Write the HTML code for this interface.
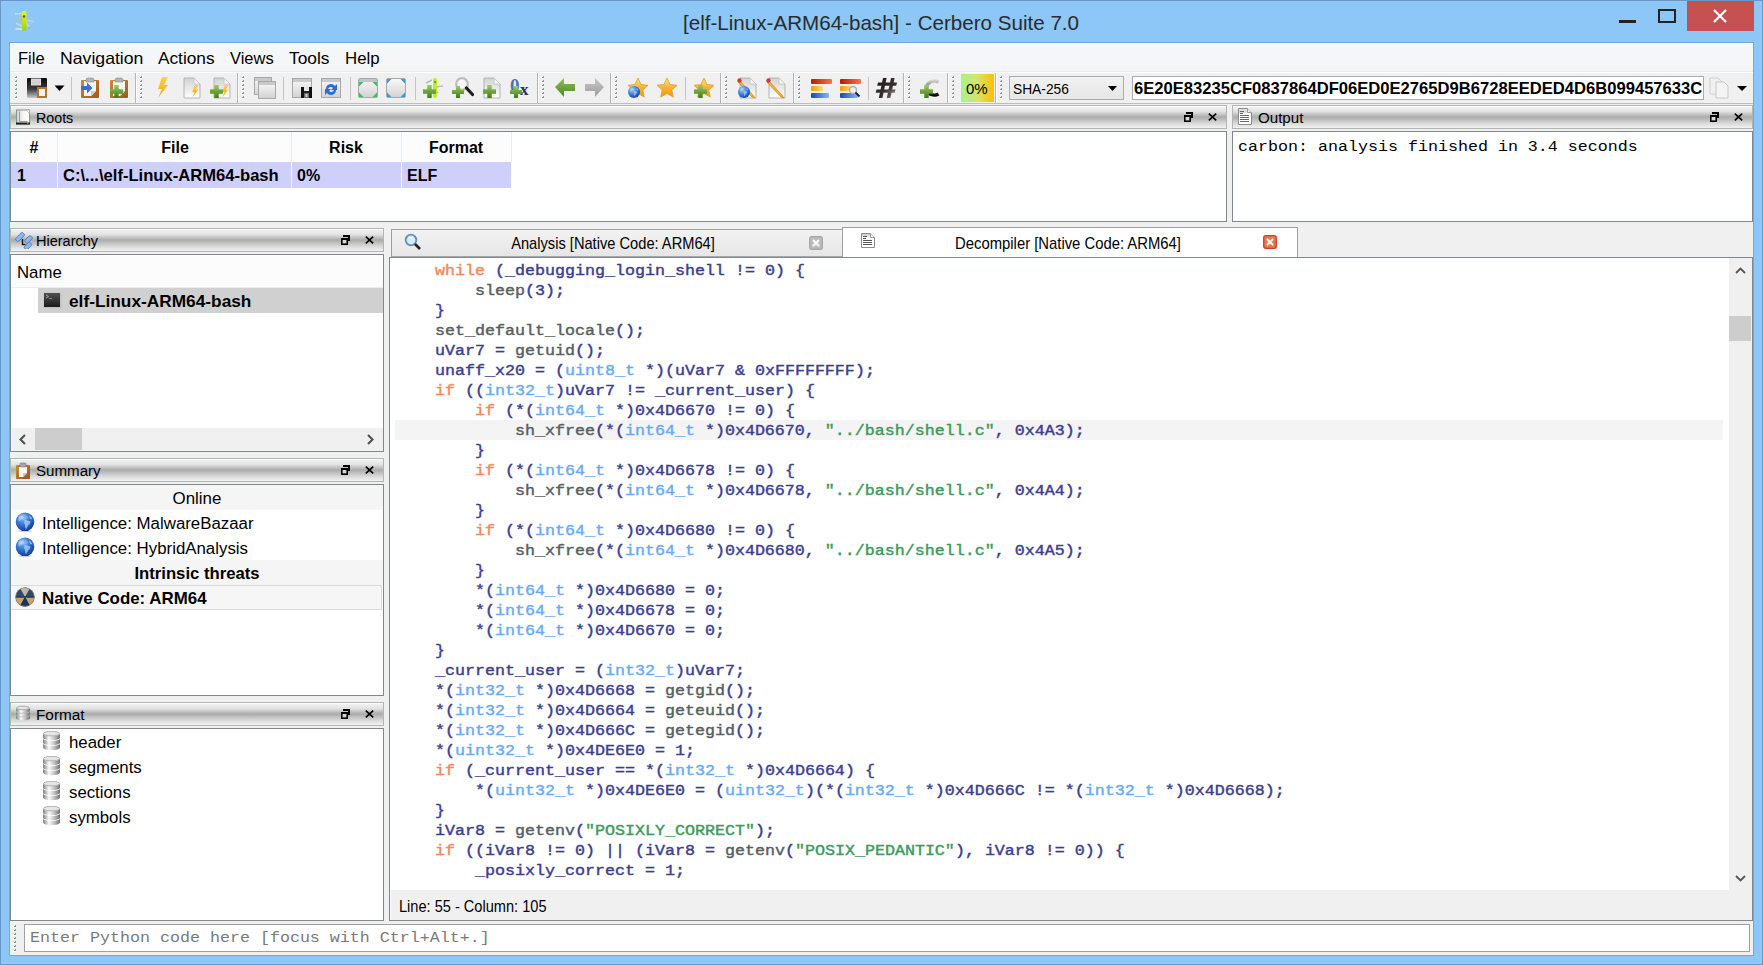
<!DOCTYPE html><html><head><meta charset="utf-8"><title>Cerbero Suite 7.0</title><style>
html,body{margin:0;padding:0}
body{width:1763px;height:965px;position:relative;overflow:hidden;background:#8CC7F7;font-family:"Liberation Sans",sans-serif}
.a{position:absolute;box-sizing:border-box}
.t{position:absolute;white-space:pre;line-height:normal}
</style></head><body>
<div class="a" style="left:0px;top:0px;width:1763px;height:965px;border:1px solid #6A96BF"></div>
<div class="a" style="left:1px;top:1px;width:1761px;height:963px;border:1px solid #90CCFF;opacity:.6"></div>
<svg class="a" style="left:8px;top:5px" width="32" height="32" viewBox="0 0 32 32"><defs><linearGradient id="gKn" x1="0" y1="0" x2="0" y2="1"><stop offset="0" stop-color="#E2FF00"/><stop offset="1" stop-color="#9AD400"/></linearGradient></defs><g stroke-linecap="round" fill="none"><path d="M14 8.5 L7.5 9" stroke="#D6D6D6" stroke-width="1.6"/><path d="M14 21 L8.5 18.5" stroke="#D2D2D2" stroke-width="1.6"/><path d="M14 24 L8 24" stroke="#E2E2E2" stroke-width="1.5"/><path d="M18 15 L25.5 16.5" stroke="#CFCFCF" stroke-width="1.5"/><path d="M18 16.5 L21 22.5" stroke="#D6D6D6" stroke-width="1.4"/></g><path d="M14.5 10 L5 15.2 Q3.8 16.6 5.6 16.6 L14.5 13.2 z" fill="#BDBDBD"/><circle cx="21" cy="22.8" r="1" fill="#A8A8A8"/><rect x="14" y="6" width="4.5" height="20" rx="2" fill="url(#gKn)"/><circle cx="16" cy="11.5" r="1.3" fill="#5A5A3A"/></svg>
<div class="t" style="left:683px;top:11.36px;font-family:'Liberation Sans', sans-serif;font-size:20.6px;font-weight:400;color:#2B2B2B;">[elf-Linux-ARM64-bash] - Cerbero Suite 7.0</div>
<div class="a" style="left:1619px;top:20px;width:17px;height:3px;background:#222"></div>
<div class="a" style="left:1658px;top:9px;width:18px;height:14px;border:2px solid #222"></div>
<div class="a" style="left:1687px;top:1px;width:67px;height:30px;background:#C75050"></div>
<svg class="a" style="left:1712px;top:9px" width="16" height="14" viewBox="0 0 16 14"><path d="M2 1 L14 13 M14 1 L2 13" stroke="#fff" stroke-width="2.2"/></svg>
<div class="a" style="left:9px;top:42px;width:1745px;height:914px;border:1px solid #74A8DB;background:#F0F0F0"></div>
<div class="a" style="left:10px;top:43px;width:1743px;height:29px;background:#F5F6F7;border-top:1px solid #FDFDFD"></div>
<div class="t" style="left:18px;top:49.07px;font-family:'Liberation Sans', sans-serif;font-size:16.5px;font-weight:400;color:#000;transform:scaleX(1.0);transform-origin:0 0;">File</div>
<div class="t" style="left:59.5px;top:49.07px;font-family:'Liberation Sans', sans-serif;font-size:16.5px;font-weight:400;color:#000;transform:scaleX(1.07);transform-origin:0 0;">Navigation</div>
<div class="t" style="left:158px;top:49.07px;font-family:'Liberation Sans', sans-serif;font-size:16.5px;font-weight:400;color:#000;transform:scaleX(1.045);transform-origin:0 0;">Actions</div>
<div class="t" style="left:230px;top:49.07px;font-family:'Liberation Sans', sans-serif;font-size:16.5px;font-weight:400;color:#000;transform:scaleX(1.0);transform-origin:0 0;">Views</div>
<div class="t" style="left:289px;top:49.07px;font-family:'Liberation Sans', sans-serif;font-size:16.5px;font-weight:400;color:#000;transform:scaleX(1.05);transform-origin:0 0;">Tools</div>
<div class="t" style="left:345px;top:49.07px;font-family:'Liberation Sans', sans-serif;font-size:16.5px;font-weight:400;color:#000;transform:scaleX(1.02);transform-origin:0 0;">Help</div>
<div class="a" style="left:10px;top:71px;width:1743px;height:1px;background:#E8E9EB"></div>
<div class="a" style="left:10px;top:72px;width:1743px;height:32px;background:#F0F0F0"></div>
<div class="a" style="left:10px;top:72px;width:1743px;height:1px;background:#FFFFFF"></div>
<div class="a" style="left:10px;top:103px;width:1743px;height:1px;background:#BDBDBD"></div>
<div class="a" style="left:10px;top:104px;width:1743px;height:1px;background:#F0F0F0"></div>
<div class="a" style="left:135px;top:73px;width:1px;height:30px;background:#B5B5B5"></div>
<div class="a" style="left:136px;top:73px;width:1px;height:30px;background:#FFFFFF"></div>
<div class="a" style="left:237px;top:73px;width:1px;height:30px;background:#B5B5B5"></div>
<div class="a" style="left:238px;top:73px;width:1px;height:30px;background:#FFFFFF"></div>
<div class="a" style="left:537px;top:73px;width:1px;height:30px;background:#B5B5B5"></div>
<div class="a" style="left:538px;top:73px;width:1px;height:30px;background:#FFFFFF"></div>
<div class="a" style="left:610px;top:73px;width:1px;height:30px;background:#B5B5B5"></div>
<div class="a" style="left:611px;top:73px;width:1px;height:30px;background:#FFFFFF"></div>
<div class="a" style="left:720px;top:73px;width:1px;height:30px;background:#B5B5B5"></div>
<div class="a" style="left:721px;top:73px;width:1px;height:30px;background:#FFFFFF"></div>
<div class="a" style="left:793px;top:73px;width:1px;height:30px;background:#B5B5B5"></div>
<div class="a" style="left:794px;top:73px;width:1px;height:30px;background:#FFFFFF"></div>
<div class="a" style="left:903px;top:73px;width:1px;height:30px;background:#B5B5B5"></div>
<div class="a" style="left:904px;top:73px;width:1px;height:30px;background:#FFFFFF"></div>
<div class="a" style="left:947px;top:73px;width:1px;height:30px;background:#B5B5B5"></div>
<div class="a" style="left:948px;top:73px;width:1px;height:30px;background:#FFFFFF"></div>
<div class="a" style="left:995px;top:73px;width:1px;height:30px;background:#B5B5B5"></div>
<div class="a" style="left:996px;top:73px;width:1px;height:30px;background:#FFFFFF"></div>
<svg class="a" style="left:14px;top:76px" width="4" height="24" viewBox="0 0 4 24"><rect x="2" y="0" width="1" height="1" fill="#A0A0A0"/><rect x="1" y="1" width="2" height="1" fill="#8E8E8E"/><rect x="0" y="2" width="3" height="1" fill="#FFF" opacity=".7"/><rect x="2" y="4" width="1" height="1" fill="#A0A0A0"/><rect x="1" y="5" width="2" height="1" fill="#8E8E8E"/><rect x="0" y="6" width="3" height="1" fill="#FFF" opacity=".7"/><rect x="2" y="8" width="1" height="1" fill="#A0A0A0"/><rect x="1" y="9" width="2" height="1" fill="#8E8E8E"/><rect x="0" y="10" width="3" height="1" fill="#FFF" opacity=".7"/><rect x="2" y="12" width="1" height="1" fill="#A0A0A0"/><rect x="1" y="13" width="2" height="1" fill="#8E8E8E"/><rect x="0" y="14" width="3" height="1" fill="#FFF" opacity=".7"/><rect x="2" y="16" width="1" height="1" fill="#A0A0A0"/><rect x="1" y="17" width="2" height="1" fill="#8E8E8E"/><rect x="0" y="18" width="3" height="1" fill="#FFF" opacity=".7"/><rect x="2" y="20" width="1" height="1" fill="#A0A0A0"/><rect x="1" y="21" width="2" height="1" fill="#8E8E8E"/><rect x="0" y="22" width="3" height="1" fill="#FFF" opacity=".7"/></svg>
<svg class="a" style="left:139px;top:76px" width="4" height="24" viewBox="0 0 4 24"><rect x="2" y="0" width="1" height="1" fill="#A0A0A0"/><rect x="1" y="1" width="2" height="1" fill="#8E8E8E"/><rect x="0" y="2" width="3" height="1" fill="#FFF" opacity=".7"/><rect x="2" y="4" width="1" height="1" fill="#A0A0A0"/><rect x="1" y="5" width="2" height="1" fill="#8E8E8E"/><rect x="0" y="6" width="3" height="1" fill="#FFF" opacity=".7"/><rect x="2" y="8" width="1" height="1" fill="#A0A0A0"/><rect x="1" y="9" width="2" height="1" fill="#8E8E8E"/><rect x="0" y="10" width="3" height="1" fill="#FFF" opacity=".7"/><rect x="2" y="12" width="1" height="1" fill="#A0A0A0"/><rect x="1" y="13" width="2" height="1" fill="#8E8E8E"/><rect x="0" y="14" width="3" height="1" fill="#FFF" opacity=".7"/><rect x="2" y="16" width="1" height="1" fill="#A0A0A0"/><rect x="1" y="17" width="2" height="1" fill="#8E8E8E"/><rect x="0" y="18" width="3" height="1" fill="#FFF" opacity=".7"/><rect x="2" y="20" width="1" height="1" fill="#A0A0A0"/><rect x="1" y="21" width="2" height="1" fill="#8E8E8E"/><rect x="0" y="22" width="3" height="1" fill="#FFF" opacity=".7"/></svg>
<svg class="a" style="left:241px;top:76px" width="4" height="24" viewBox="0 0 4 24"><rect x="2" y="0" width="1" height="1" fill="#A0A0A0"/><rect x="1" y="1" width="2" height="1" fill="#8E8E8E"/><rect x="0" y="2" width="3" height="1" fill="#FFF" opacity=".7"/><rect x="2" y="4" width="1" height="1" fill="#A0A0A0"/><rect x="1" y="5" width="2" height="1" fill="#8E8E8E"/><rect x="0" y="6" width="3" height="1" fill="#FFF" opacity=".7"/><rect x="2" y="8" width="1" height="1" fill="#A0A0A0"/><rect x="1" y="9" width="2" height="1" fill="#8E8E8E"/><rect x="0" y="10" width="3" height="1" fill="#FFF" opacity=".7"/><rect x="2" y="12" width="1" height="1" fill="#A0A0A0"/><rect x="1" y="13" width="2" height="1" fill="#8E8E8E"/><rect x="0" y="14" width="3" height="1" fill="#FFF" opacity=".7"/><rect x="2" y="16" width="1" height="1" fill="#A0A0A0"/><rect x="1" y="17" width="2" height="1" fill="#8E8E8E"/><rect x="0" y="18" width="3" height="1" fill="#FFF" opacity=".7"/><rect x="2" y="20" width="1" height="1" fill="#A0A0A0"/><rect x="1" y="21" width="2" height="1" fill="#8E8E8E"/><rect x="0" y="22" width="3" height="1" fill="#FFF" opacity=".7"/></svg>
<svg class="a" style="left:541px;top:76px" width="4" height="24" viewBox="0 0 4 24"><rect x="2" y="0" width="1" height="1" fill="#A0A0A0"/><rect x="1" y="1" width="2" height="1" fill="#8E8E8E"/><rect x="0" y="2" width="3" height="1" fill="#FFF" opacity=".7"/><rect x="2" y="4" width="1" height="1" fill="#A0A0A0"/><rect x="1" y="5" width="2" height="1" fill="#8E8E8E"/><rect x="0" y="6" width="3" height="1" fill="#FFF" opacity=".7"/><rect x="2" y="8" width="1" height="1" fill="#A0A0A0"/><rect x="1" y="9" width="2" height="1" fill="#8E8E8E"/><rect x="0" y="10" width="3" height="1" fill="#FFF" opacity=".7"/><rect x="2" y="12" width="1" height="1" fill="#A0A0A0"/><rect x="1" y="13" width="2" height="1" fill="#8E8E8E"/><rect x="0" y="14" width="3" height="1" fill="#FFF" opacity=".7"/><rect x="2" y="16" width="1" height="1" fill="#A0A0A0"/><rect x="1" y="17" width="2" height="1" fill="#8E8E8E"/><rect x="0" y="18" width="3" height="1" fill="#FFF" opacity=".7"/><rect x="2" y="20" width="1" height="1" fill="#A0A0A0"/><rect x="1" y="21" width="2" height="1" fill="#8E8E8E"/><rect x="0" y="22" width="3" height="1" fill="#FFF" opacity=".7"/></svg>
<svg class="a" style="left:614px;top:76px" width="4" height="24" viewBox="0 0 4 24"><rect x="2" y="0" width="1" height="1" fill="#A0A0A0"/><rect x="1" y="1" width="2" height="1" fill="#8E8E8E"/><rect x="0" y="2" width="3" height="1" fill="#FFF" opacity=".7"/><rect x="2" y="4" width="1" height="1" fill="#A0A0A0"/><rect x="1" y="5" width="2" height="1" fill="#8E8E8E"/><rect x="0" y="6" width="3" height="1" fill="#FFF" opacity=".7"/><rect x="2" y="8" width="1" height="1" fill="#A0A0A0"/><rect x="1" y="9" width="2" height="1" fill="#8E8E8E"/><rect x="0" y="10" width="3" height="1" fill="#FFF" opacity=".7"/><rect x="2" y="12" width="1" height="1" fill="#A0A0A0"/><rect x="1" y="13" width="2" height="1" fill="#8E8E8E"/><rect x="0" y="14" width="3" height="1" fill="#FFF" opacity=".7"/><rect x="2" y="16" width="1" height="1" fill="#A0A0A0"/><rect x="1" y="17" width="2" height="1" fill="#8E8E8E"/><rect x="0" y="18" width="3" height="1" fill="#FFF" opacity=".7"/><rect x="2" y="20" width="1" height="1" fill="#A0A0A0"/><rect x="1" y="21" width="2" height="1" fill="#8E8E8E"/><rect x="0" y="22" width="3" height="1" fill="#FFF" opacity=".7"/></svg>
<svg class="a" style="left:724px;top:76px" width="4" height="24" viewBox="0 0 4 24"><rect x="2" y="0" width="1" height="1" fill="#A0A0A0"/><rect x="1" y="1" width="2" height="1" fill="#8E8E8E"/><rect x="0" y="2" width="3" height="1" fill="#FFF" opacity=".7"/><rect x="2" y="4" width="1" height="1" fill="#A0A0A0"/><rect x="1" y="5" width="2" height="1" fill="#8E8E8E"/><rect x="0" y="6" width="3" height="1" fill="#FFF" opacity=".7"/><rect x="2" y="8" width="1" height="1" fill="#A0A0A0"/><rect x="1" y="9" width="2" height="1" fill="#8E8E8E"/><rect x="0" y="10" width="3" height="1" fill="#FFF" opacity=".7"/><rect x="2" y="12" width="1" height="1" fill="#A0A0A0"/><rect x="1" y="13" width="2" height="1" fill="#8E8E8E"/><rect x="0" y="14" width="3" height="1" fill="#FFF" opacity=".7"/><rect x="2" y="16" width="1" height="1" fill="#A0A0A0"/><rect x="1" y="17" width="2" height="1" fill="#8E8E8E"/><rect x="0" y="18" width="3" height="1" fill="#FFF" opacity=".7"/><rect x="2" y="20" width="1" height="1" fill="#A0A0A0"/><rect x="1" y="21" width="2" height="1" fill="#8E8E8E"/><rect x="0" y="22" width="3" height="1" fill="#FFF" opacity=".7"/></svg>
<svg class="a" style="left:797px;top:76px" width="4" height="24" viewBox="0 0 4 24"><rect x="2" y="0" width="1" height="1" fill="#A0A0A0"/><rect x="1" y="1" width="2" height="1" fill="#8E8E8E"/><rect x="0" y="2" width="3" height="1" fill="#FFF" opacity=".7"/><rect x="2" y="4" width="1" height="1" fill="#A0A0A0"/><rect x="1" y="5" width="2" height="1" fill="#8E8E8E"/><rect x="0" y="6" width="3" height="1" fill="#FFF" opacity=".7"/><rect x="2" y="8" width="1" height="1" fill="#A0A0A0"/><rect x="1" y="9" width="2" height="1" fill="#8E8E8E"/><rect x="0" y="10" width="3" height="1" fill="#FFF" opacity=".7"/><rect x="2" y="12" width="1" height="1" fill="#A0A0A0"/><rect x="1" y="13" width="2" height="1" fill="#8E8E8E"/><rect x="0" y="14" width="3" height="1" fill="#FFF" opacity=".7"/><rect x="2" y="16" width="1" height="1" fill="#A0A0A0"/><rect x="1" y="17" width="2" height="1" fill="#8E8E8E"/><rect x="0" y="18" width="3" height="1" fill="#FFF" opacity=".7"/><rect x="2" y="20" width="1" height="1" fill="#A0A0A0"/><rect x="1" y="21" width="2" height="1" fill="#8E8E8E"/><rect x="0" y="22" width="3" height="1" fill="#FFF" opacity=".7"/></svg>
<svg class="a" style="left:907px;top:76px" width="4" height="24" viewBox="0 0 4 24"><rect x="2" y="0" width="1" height="1" fill="#A0A0A0"/><rect x="1" y="1" width="2" height="1" fill="#8E8E8E"/><rect x="0" y="2" width="3" height="1" fill="#FFF" opacity=".7"/><rect x="2" y="4" width="1" height="1" fill="#A0A0A0"/><rect x="1" y="5" width="2" height="1" fill="#8E8E8E"/><rect x="0" y="6" width="3" height="1" fill="#FFF" opacity=".7"/><rect x="2" y="8" width="1" height="1" fill="#A0A0A0"/><rect x="1" y="9" width="2" height="1" fill="#8E8E8E"/><rect x="0" y="10" width="3" height="1" fill="#FFF" opacity=".7"/><rect x="2" y="12" width="1" height="1" fill="#A0A0A0"/><rect x="1" y="13" width="2" height="1" fill="#8E8E8E"/><rect x="0" y="14" width="3" height="1" fill="#FFF" opacity=".7"/><rect x="2" y="16" width="1" height="1" fill="#A0A0A0"/><rect x="1" y="17" width="2" height="1" fill="#8E8E8E"/><rect x="0" y="18" width="3" height="1" fill="#FFF" opacity=".7"/><rect x="2" y="20" width="1" height="1" fill="#A0A0A0"/><rect x="1" y="21" width="2" height="1" fill="#8E8E8E"/><rect x="0" y="22" width="3" height="1" fill="#FFF" opacity=".7"/></svg>
<svg class="a" style="left:951px;top:76px" width="4" height="24" viewBox="0 0 4 24"><rect x="2" y="0" width="1" height="1" fill="#A0A0A0"/><rect x="1" y="1" width="2" height="1" fill="#8E8E8E"/><rect x="0" y="2" width="3" height="1" fill="#FFF" opacity=".7"/><rect x="2" y="4" width="1" height="1" fill="#A0A0A0"/><rect x="1" y="5" width="2" height="1" fill="#8E8E8E"/><rect x="0" y="6" width="3" height="1" fill="#FFF" opacity=".7"/><rect x="2" y="8" width="1" height="1" fill="#A0A0A0"/><rect x="1" y="9" width="2" height="1" fill="#8E8E8E"/><rect x="0" y="10" width="3" height="1" fill="#FFF" opacity=".7"/><rect x="2" y="12" width="1" height="1" fill="#A0A0A0"/><rect x="1" y="13" width="2" height="1" fill="#8E8E8E"/><rect x="0" y="14" width="3" height="1" fill="#FFF" opacity=".7"/><rect x="2" y="16" width="1" height="1" fill="#A0A0A0"/><rect x="1" y="17" width="2" height="1" fill="#8E8E8E"/><rect x="0" y="18" width="3" height="1" fill="#FFF" opacity=".7"/><rect x="2" y="20" width="1" height="1" fill="#A0A0A0"/><rect x="1" y="21" width="2" height="1" fill="#8E8E8E"/><rect x="0" y="22" width="3" height="1" fill="#FFF" opacity=".7"/></svg>
<svg class="a" style="left:999px;top:76px" width="4" height="24" viewBox="0 0 4 24"><rect x="2" y="0" width="1" height="1" fill="#A0A0A0"/><rect x="1" y="1" width="2" height="1" fill="#8E8E8E"/><rect x="0" y="2" width="3" height="1" fill="#FFF" opacity=".7"/><rect x="2" y="4" width="1" height="1" fill="#A0A0A0"/><rect x="1" y="5" width="2" height="1" fill="#8E8E8E"/><rect x="0" y="6" width="3" height="1" fill="#FFF" opacity=".7"/><rect x="2" y="8" width="1" height="1" fill="#A0A0A0"/><rect x="1" y="9" width="2" height="1" fill="#8E8E8E"/><rect x="0" y="10" width="3" height="1" fill="#FFF" opacity=".7"/><rect x="2" y="12" width="1" height="1" fill="#A0A0A0"/><rect x="1" y="13" width="2" height="1" fill="#8E8E8E"/><rect x="0" y="14" width="3" height="1" fill="#FFF" opacity=".7"/><rect x="2" y="16" width="1" height="1" fill="#A0A0A0"/><rect x="1" y="17" width="2" height="1" fill="#8E8E8E"/><rect x="0" y="18" width="3" height="1" fill="#FFF" opacity=".7"/><rect x="2" y="20" width="1" height="1" fill="#A0A0A0"/><rect x="1" y="21" width="2" height="1" fill="#8E8E8E"/><rect x="0" y="22" width="3" height="1" fill="#FFF" opacity=".7"/></svg>
<div class="a" style="left:71px;top:77px;width:1px;height:23px;background:#C4C4C4"></div>
<div class="a" style="left:283px;top:77px;width:1px;height:23px;background:#C4C4C4"></div>
<div class="a" style="left:350px;top:77px;width:1px;height:23px;background:#C4C4C4"></div>
<div class="a" style="left:415px;top:77px;width:1px;height:23px;background:#C4C4C4"></div>
<div class="a" style="left:685px;top:77px;width:1px;height:23px;background:#C4C4C4"></div>
<div class="a" style="left:868px;top:77px;width:1px;height:23px;background:#C4C4C4"></div>
<svg width="0" height="0" style="position:absolute"><defs><linearGradient id="gFl" x1="0" y1="0" x2="0" y2="1"><stop offset="0" stop-color="#111"/><stop offset="1" stop-color="#9A9A9A"/></linearGradient><linearGradient id="gWin" x1="0" y1="0" x2="0" y2="1"><stop offset="0" stop-color="#FAFAFA"/><stop offset="1" stop-color="#D2D2D2"/></linearGradient><linearGradient id="gStar" x1="0" y1="0" x2="0" y2="1"><stop offset="0" stop-color="#FFE9A0"/><stop offset=".5" stop-color="#F9B233"/><stop offset="1" stop-color="#EE9A10"/></linearGradient><linearGradient id="gGreen" x1="0" y1="0" x2="0" y2="1"><stop offset="0" stop-color="#9BCB6A"/><stop offset="1" stop-color="#3F7A14"/></linearGradient><linearGradient id="gArrG" x1="0" y1="0" x2="0" y2="1"><stop offset="0" stop-color="#8DC05A"/><stop offset="1" stop-color="#4C8A1E"/></linearGradient><linearGradient id="gArrS" x1="0" y1="0" x2="0" y2="1"><stop offset="0" stop-color="#C8C8C8"/><stop offset="1" stop-color="#9C9C9C"/></linearGradient><linearGradient id="gDoc" x1="0" y1="0" x2="0" y2="1"><stop offset="0" stop-color="#D2D2D2"/><stop offset="1" stop-color="#FFFFFF"/></linearGradient><linearGradient id="gBolt" x1="0" y1="0" x2="0" y2="1"><stop offset="0" stop-color="#FFD34A"/><stop offset="1" stop-color="#F7A10A"/></linearGradient><radialGradient id="gGlobe" cx=".35" cy=".3" r=".8"><stop offset="0" stop-color="#9BD0FF"/><stop offset=".6" stop-color="#2E6FD0"/><stop offset="1" stop-color="#123F94"/></radialGradient><linearGradient id="gPct" x1="0" y1="0" x2="1" y2="0"><stop offset="0" stop-color="#A6F290"/><stop offset=".5" stop-color="#DDE060"/><stop offset="1" stop-color="#FFBE00"/></linearGradient></defs></svg>
<svg class="a" style="left:27px;top:78px" width="21" height="21" viewBox="0 0 21 21"><defs><linearGradient id="gFl2" x1="0" y1="0" x2="0" y2="1"><stop offset="0" stop-color="#0A0A0A"/><stop offset=".55" stop-color="#3A3A3A"/><stop offset="1" stop-color="#C8C8C8"/></linearGradient></defs><rect x="0" y="0" width="20" height="20" rx="1" fill="url(#gFl2)"/><rect x="4" y="0.5" width="10" height="7" fill="#E2E2E2"/><rect x="5" y="1.5" width="8" height="5" fill="#D0D0D0"/><rect x="10" y="9" width="10" height="11" fill="#B5742F"/><rect x="12" y="11" width="6" height="7" fill="#F2F2F2"/></svg>
<svg class="a" style="left:54px;top:85px" width="11" height="7" viewBox="0 0 11 7"><path d="M0.5 0.5 h10 l-5 5.5 z" fill="#000"/></svg>
<svg class="a" style="left:81px;top:77px" width="20" height="22" viewBox="0 0 20 22"><defs><linearGradient id="gCb2" x1="0" y1="0" x2="1" y2="1"><stop offset="0" stop-color="#CE8838"/><stop offset="1" stop-color="#9C5A1C"/></linearGradient></defs><rect x="0" y="3" width="18" height="18" rx="1" fill="url(#gCb2)"/><path d="M3 4 h12 v10 l-5 5 h-7 z" fill="#F6F6F6"/><path d="M15 14 l-5 5 v-5 z" fill="#CFCFCF"/><path d="M5 5 v-2 q0 -2 2 -2 h4 q2 0 2 2 v2 z" fill="#B4B4B4" stroke="#8A8A8A" stroke-width=".6"/><path d="M0 9 h6 v-3.5 l5.5 5.5 l-5.5 5.5 v-3.5 h-6 z" fill="#3C70D0"/></svg>
<svg class="a" style="left:110px;top:77px" width="20" height="22" viewBox="0 0 20 22"><defs><linearGradient id="gCb2" x1="0" y1="0" x2="1" y2="1"><stop offset="0" stop-color="#CE8838"/><stop offset="1" stop-color="#9C5A1C"/></linearGradient></defs><rect x="0" y="3" width="18" height="18" rx="1" fill="url(#gCb2)"/><path d="M3 4 h12 v10 l-5 5 h-7 z" fill="#F6F6F6"/><path d="M15 14 l-5 5 v-5 z" fill="#CFCFCF"/><path d="M5 5 v-2 q0 -2 2 -2 h4 q2 0 2 2 v2 z" fill="#B4B4B4" stroke="#8A8A8A" stroke-width=".6"/><path d="M4.29 8 h4.42 v4.29 h4.29 v4.42 h-4.29 v4.29 h-4.42 v-4.29 h-4.29 v-4.42 h4.29 z" fill="url(#gGreen)"/></svg>
<svg class="a" style="left:156px;top:77px" width="14" height="22" viewBox="0 0 14 22"><path transform="translate(0,0) scale(1)" d="M6 0 h6 l-4 8 h4 l-10 13 l4 -9 h-4 z" fill="url(#gBolt)"/></svg>
<svg class="a" style="left:183px;top:77px" width="19" height="22" viewBox="0 0 19 22"><path d="M1 1 h10 l6 6 v14 h-16 z" fill="url(#gDoc)" stroke="#B4B4B4"/><path d="M11 1 v6 h6 z" fill="#F6F6F6" stroke="#C4C4C4" stroke-width=".8"/><path transform="translate(8,8) scale(0.6)" d="M6 0 h6 l-4 8 h4 l-10 13 l4 -9 h-4 z" fill="url(#gBolt)"/></svg>
<svg class="a" style="left:210px;top:77px" width="21" height="22" viewBox="0 0 21 22"><g transform="translate(3,0)"><path d="M1 1 h10 l6 6 v14 h-16 z" fill="url(#gDoc)" stroke="#B4B4B4"/><path d="M11 1 v6 h6 z" fill="#F6F6F6" stroke="#C4C4C4" stroke-width=".8"/><path transform="translate(8,8) scale(0.6)" d="M6 0 h6 l-4 8 h4 l-10 13 l4 -9 h-4 z" fill="url(#gBolt)"/></g><path d="M4.29 8 h4.42 v4.29 h4.29 v4.42 h-4.29 v4.29 h-4.42 v-4.29 h-4.29 v-4.42 h4.29 z" fill="url(#gGreen)"/></svg>
<svg class="a" style="left:254px;top:77px" width="23" height="23" viewBox="0 0 23 23"><rect x="0.5" y="0.5" width="17" height="17" fill="url(#gWin)" stroke="#A8A8A8"/><rect x="1" y="1" width="16" height="3" fill="#C9C9C9"/><rect x="4.5" y="4.5" width="17" height="17" fill="url(#gWin)" stroke="#A8A8A8"/><rect x="5" y="5" width="16" height="3" fill="#C9C9C9"/></svg>
<svg class="a" style="left:292px;top:78px" width="21" height="21" viewBox="0 0 21 21"><rect x="0.5" y="0.5" width="19" height="19" fill="url(#gWin)" stroke="#A8A8A8"/><rect x="1" y="1" width="18" height="3" fill="#C9C9C9"/><rect x="9" y="9" width="3" height="11" fill="#111"/><rect x="17" y="9" width="3" height="11" fill="#111"/><rect x="12" y="9" width="5" height="4" fill="#E4E4E4"/><rect x="12" y="13" width="5" height="2" fill="#222"/><rect x="12" y="15" width="5" height="5" fill="#6A6A6A"/><rect x="13.5" y="16" width="2" height="3" fill="#D0D0D0"/></svg>
<svg class="a" style="left:321px;top:78px" width="21" height="21" viewBox="0 0 21 21"><rect x="0.5" y="0.5" width="19" height="19" fill="url(#gWin)" stroke="#A8A8A8"/><rect x="1" y="1" width="18" height="3" fill="#C9C9C9"/><path d="M5 11 a5 5 0 0 1 9 -3 l2 -2 v6 h-6 l2 -2 a3 3 0 0 0 -5 1 z M15 12 a5 5 0 0 1 -9 3 l-2 2 v-6 h6 l-2 2 a3 3 0 0 0 5 -1 z" fill="#2A6FD6"/></svg>
<svg class="a" style="left:358px;top:78px" width="21" height="21" viewBox="0 0 21 21"><rect x=".5" y=".5" width="19" height="19" rx="1.5" fill="url(#gWin)" stroke="#A8A8A8"/><rect x="1" y="1" width="18" height="3" fill="#C4C4C4"/><path d="M1 4 h4.5 l-4.5 4.5 z M19 4 h-4.5 l4.5 4.5 z M1 19 h4.5 l-4.5 -4.5 z M19 19 h-4.5 l4.5 -4.5 z" fill="#3CC060"/></svg>
<svg class="a" style="left:386px;top:78px" width="21" height="21" viewBox="0 0 21 21"><rect x=".5" y=".5" width="19" height="19" rx="1.5" fill="url(#gWin)" stroke="#A8A8A8"/><path d="M1 1 h4.5 l-4.5 4.5 z M19 1 h-4.5 l4.5 4.5 z M1 19 h4.5 l-4.5 -4.5 z M19 19 h-4.5 l4.5 -4.5 z" fill="#3E98D8"/></svg>
<svg class="a" style="left:423px;top:77px" width="22" height="22" viewBox="0 0 22 22"><path d="M3 6 L9 3 M12 10 L20 9 M12 13 L15 16" stroke="#BDBDBD" stroke-width="1.5"/><rect x="10" y="1" width="4" height="20" rx="2" fill="#B9F01E"/><circle cx="12" cy="5" r=".8" fill="#333"/><path d="M4.29 8 h4.42 v4.29 h4.29 v4.42 h-4.29 v4.29 h-4.42 v-4.29 h-4.29 v-4.42 h4.29 z" fill="url(#gGreen)"/></svg>
<svg class="a" style="left:452px;top:77px" width="22" height="22" viewBox="0 0 22 22"><circle cx="10" cy="7" r="5.8" fill="#F6F6F6" stroke="#BDBDBD" stroke-width="2.2"/><path d="M14.5 11 l6 6.5" stroke="#1E1E1E" stroke-width="3.2" stroke-linecap="round"/><path d="M3.96 9 h4.08 v3.96 h3.96 v4.08 h-3.96 v3.96 h-4.08 v-3.96 h-3.96 v-4.08 h3.96 z" fill="url(#gGreen)"/></svg>
<svg class="a" style="left:483px;top:77px" width="20" height="22" viewBox="0 0 20 22"><path d="M1 1 h10 l6 6 v14 h-16 z" fill="url(#gDoc)" stroke="#B4B4B4"/><path d="M11 1 v6 h6 z" fill="#F6F6F6" stroke="#C4C4C4" stroke-width=".8"/><path d="M4.29 8 h4.42 v4.29 h4.29 v4.42 h-4.29 v4.29 h-4.42 v-4.29 h-4.29 v-4.42 h4.29 z" fill="url(#gGreen)"/></svg>
<svg class="a" style="left:510px;top:77px" width="23" height="22" viewBox="0 0 23 22"><text x="0" y="15" font-family="Liberation Serif" font-weight="700" font-size="19" fill="#4A74B0">0</text><text x="10" y="18" font-family="Liberation Serif" font-weight="700" font-size="17" fill="#1F3560">x</text><path d="M3.96 9 h4.08 v3.96 h3.96 v4.08 h-3.96 v3.96 h-4.08 v-3.96 h-3.96 v-4.08 h3.96 z" fill="url(#gGreen)"/></svg>
<svg class="a" style="left:555px;top:77px" width="21" height="22" viewBox="0 0 21 22"><path d="M0 10 l9 -9 v6 h11 v7 h-11 v6 z" fill="url(#gArrG)"/></svg>
<svg class="a" style="left:585px;top:77px" width="20" height="22" viewBox="0 0 20 22"><path d="M19 10 l-9 -9 v6 h-10 v7 h10 v6 z" fill="url(#gArrS)"/></svg>
<svg class="a" style="left:627px;top:77px" width="22" height="22" viewBox="0 0 22 22"><path transform="translate(0,0) scale(1)" d="M11 1 l3 6.5 l7 .8 l-5.2 4.8 l1.5 7 l-6.3 -3.6 l-6.3 3.6 l1.5 -7 l-5.2 -4.8 l7 -.8 z" fill="url(#gStar)" stroke="#E59A1A" stroke-width=".8"/><g transform="translate(1,9) scale(0.6)"><circle cx="10" cy="10" r="10" fill="url(#gGlobe)"/><path d="M4 4.5 q2 -1.5 4.5 -1 q-.5 1.5 .5 2.5 q-1.5 1.5 -3 1 q-.5 2 -2.2 2.5 q-.8 -2.5 .2 -5 z M9.5 8 q2.5 -.5 3.5 1 q1.5 -.5 2.5 1 q-.5 2.5 -2.5 3.5 q-1 2 -2 4 q-1.2 -2.5 -1 -4.5 q-1.5 -1.5 -.5 -5 z M14 3.5 q2.5 1 3.5 3.5 q-1.5 .5 -2.5 -.5 q-1 -1.5 -1 -3 z" fill="#A9D3FF" opacity=".7"/></g></svg>
<svg class="a" style="left:656px;top:77px" width="22" height="22" viewBox="0 0 22 22"><path transform="translate(0,0) scale(1)" d="M11 1 l3 6.5 l7 .8 l-5.2 4.8 l1.5 7 l-6.3 -3.6 l-6.3 3.6 l1.5 -7 l-5.2 -4.8 l7 -.8 z" fill="url(#gStar)" stroke="#E59A1A" stroke-width=".8"/></svg>
<svg class="a" style="left:693px;top:77px" width="22" height="22" viewBox="0 0 22 22"><path transform="translate(0,0) scale(1)" d="M11 1 l3 6.5 l7 .8 l-5.2 4.8 l1.5 7 l-6.3 -3.6 l-6.3 3.6 l1.5 -7 l-5.2 -4.8 l7 -.8 z" fill="url(#gStar)" stroke="#E59A1A" stroke-width=".8"/><path d="M5.29 8 h4.42 v4.29 h4.29 v4.42 h-4.29 v4.29 h-4.42 v-4.29 h-4.29 v-4.42 h4.29 z" fill="url(#gGreen)"/></svg>
<svg class="a" style="left:737px;top:77px" width="21" height="22" viewBox="0 0 21 22"><g transform="translate(2,0)"><path d="M1 1 h10 l6 6 v14 h-16 z" fill="url(#gDoc)" stroke="#B4B4B4"/><path d="M11 1 v6 h6 z" fill="#F6F6F6" stroke="#C4C4C4" stroke-width=".8"/></g><path d="M2 3 l14 15 l2 3 l-3 -1 l-14 -15 z" fill="#F5B32E" stroke="#C07A10" stroke-width=".6"/><circle cx="2.5" cy="3.5" r="2.2" fill="#D03838"/><g transform="translate(1,9) scale(0.6)"><circle cx="10" cy="10" r="10" fill="url(#gGlobe)"/><path d="M4 4.5 q2 -1.5 4.5 -1 q-.5 1.5 .5 2.5 q-1.5 1.5 -3 1 q-.5 2 -2.2 2.5 q-.8 -2.5 .2 -5 z M9.5 8 q2.5 -.5 3.5 1 q1.5 -.5 2.5 1 q-.5 2.5 -2.5 3.5 q-1 2 -2 4 q-1.2 -2.5 -1 -4.5 q-1.5 -1.5 -.5 -5 z M14 3.5 q2.5 1 3.5 3.5 q-1.5 .5 -2.5 -.5 q-1 -1.5 -1 -3 z" fill="#A9D3FF" opacity=".7"/></g></svg>
<svg class="a" style="left:766px;top:77px" width="21" height="22" viewBox="0 0 21 22"><g transform="translate(2,0)"><path d="M1 1 h10 l6 6 v14 h-16 z" fill="url(#gDoc)" stroke="#B4B4B4"/><path d="M11 1 v6 h6 z" fill="#F6F6F6" stroke="#C4C4C4" stroke-width=".8"/></g><path d="M2 3 l14 15 l2 3 l-3 -1 l-14 -15 z" fill="#F5B32E" stroke="#C07A10" stroke-width=".6"/><circle cx="2.5" cy="3.5" r="2.2" fill="#D03838"/></svg>
<svg class="a" style="left:811px;top:78px" width="22" height="21" viewBox="0 0 22 21"><defs><linearGradient id="gB1" x1="0" y1="0" x2="1" y2="0"><stop offset="0" stop-color="#B81800"/><stop offset="1" stop-color="#F27A4A"/></linearGradient><linearGradient id="gB2" x1="0" y1="0" x2="1" y2="0"><stop offset="0" stop-color="#F29A00"/><stop offset="1" stop-color="#FFE070"/></linearGradient><linearGradient id="gB3" x1="0" y1="0" x2="1" y2="0"><stop offset="0" stop-color="#1848B8"/><stop offset="1" stop-color="#88B8F0"/></linearGradient></defs><rect x="0" y="1" width="21" height="5" rx="1" fill="url(#gB1)"/><rect x="0" y="8" width="12" height="5" rx="1" fill="url(#gB2)"/><rect x="0" y="15" width="18" height="5" rx="1" fill="url(#gB3)"/></svg>
<svg class="a" style="left:840px;top:78px" width="22" height="21" viewBox="0 0 22 21"><defs><linearGradient id="gB1" x1="0" y1="0" x2="1" y2="0"><stop offset="0" stop-color="#B81800"/><stop offset="1" stop-color="#F27A4A"/></linearGradient><linearGradient id="gB2" x1="0" y1="0" x2="1" y2="0"><stop offset="0" stop-color="#F29A00"/><stop offset="1" stop-color="#FFE070"/></linearGradient><linearGradient id="gB3" x1="0" y1="0" x2="1" y2="0"><stop offset="0" stop-color="#1848B8"/><stop offset="1" stop-color="#88B8F0"/></linearGradient></defs><rect x="0" y="1" width="21" height="5" rx="1" fill="url(#gB1)"/><rect x="0" y="8" width="12" height="5" rx="1" fill="url(#gB2)"/><rect x="0" y="15" width="18" height="5" rx="1" fill="url(#gB3)"/><circle cx="13" cy="12" r="3.5" fill="#EEE" stroke="#AAA" stroke-width="1.3"/><path d="M15.5 14.5 l4 4" stroke="#222" stroke-width="2"/></svg>
<svg class="a" style="left:875px;top:77px" width="23" height="22" viewBox="0 0 23 22"><defs><linearGradient id="gHash" x1="0" y1="0" x2="1" y2="1"><stop offset="0" stop-color="#1E1A1A"/><stop offset=".6" stop-color="#3A3030"/><stop offset="1" stop-color="#8A8080"/></linearGradient></defs><g fill="url(#gHash)"><path d="M8 1 h3.6 l-4.2 20 h-3.6 z M16 1 h3.6 l-4.2 20 h-3.6 z"/><path d="M3 5.5 h19 l-.8 3.2 h-19 z M1.5 12.5 h19 l-.8 3.2 h-19 z"/></g></svg>
<svg class="a" style="left:920px;top:77px" width="22" height="22" viewBox="0 0 22 22"><defs><linearGradient id="gC" gradientUnits="userSpaceOnUse" x1="0" y1="3" x2="0" y2="19"><stop offset="0" stop-color="#D8D8D8"/><stop offset=".45" stop-color="#7A7A7A"/><stop offset="1" stop-color="#000"/></linearGradient></defs><path d="M18.5 5 A8 7 0 1 0 18.5 17" fill="none" stroke="url(#gC)" stroke-width="3.4"/><path d="M4.29 8 h4.42 v4.29 h4.29 v4.42 h-4.29 v4.29 h-4.42 v-4.29 h-4.29 v-4.42 h4.29 z" fill="url(#gGreen)"/></svg>
<div class="a" style="left:961px;top:74px;width:33px;height:28px;background:linear-gradient(90deg,#A6F290,#D6E46A 50%,#FFBE00)"></div>
<div class="t" style="left:966px;top:80.42px;font-family:'Liberation Sans', sans-serif;font-size:15px;font-weight:400;color:#000;">0%</div>
<div class="a" style="left:1009px;top:76px;width:115px;height:24px;border:1px solid #ACACAC;background:linear-gradient(#F2F2F2,#E6E6E6)"></div>
<div class="t" style="left:1013px;top:80.61px;font-family:'Liberation Sans', sans-serif;font-size:14.8px;font-weight:400;color:#000;transform:scaleX(0.93);transform-origin:0 0;">SHA-256</div>
<svg class="a" style="left:1108px;top:86px" width="9" height="5" viewBox="0 0 9 5"><path d="M0 0 h9 l-4.5 5 z" fill="#000"/></svg>
<div class="a" style="left:1132px;top:76px;width:572px;height:24px;border:1px solid #ABADB3;background:#FFF"></div>
<div class="t" style="left:1134px;top:79.48px;font-family:'Liberation Sans', sans-serif;font-size:16.6px;font-weight:700;color:#000;">6E20E83235CF0837864DF06ED0E2765D9B6728EEDED4D6B099457633C</div>
<svg class="a" style="left:1709px;top:77px" width="22" height="22" viewBox="0 0 22 22"><path d="M1 1 h8 l4 4 v12 h-12 z" fill="#F0F0F0" stroke="#CFCFCF"/><path d="M7 5 h8 l4 4 v12 h-12 z" fill="#F4F4F4" stroke="#C8C8C8"/></svg>
<svg class="a" style="left:1737px;top:86px" width="10" height="5" viewBox="0 0 10 5"><path d="M0 0 h10 l-5 5 z" fill="#000"/></svg>
<div class="a" style="left:10px;top:105px;width:1217px;height:24px;border:1px solid #B4B4B4;background:linear-gradient(#F4F4F4 0%,#E2E2E2 25%,#ABABAB 50%,#D8D8D8 78%,#F2F2F2 100%)"></div>
<div class="a" style="left:11px;top:106px;width:1215px;height:1px;background:rgba(255,255,255,.7)"></div>
<svg class="a" style="left:15px;top:108px" width="18" height="18" viewBox="0 0 18 18"><defs><linearGradient id="gRt" x1="0" y1="0" x2="1" y2="0"><stop offset="0" stop-color="#CFCFCF"/><stop offset=".5" stop-color="#F4F4F4"/><stop offset="1" stop-color="#FFFFFF"/></linearGradient></defs><g transform="translate(0,-1.5)"><rect x="1.5" y="3.5" width="13" height="14" fill="url(#gRt)" stroke="#8E8E8E"/><path d="M4.5 5 v10 h8" fill="none" stroke="#9A9A9A"/><path d="M11 3.5 l3.5 3.5 v-3.5 z" fill="#FFF" stroke="#A0A0A0" stroke-width=".6"/><rect x="1" y="16" width="14" height="2" fill="#1E1E1E"/><rect x="12" y="16" width="1.5" height="1.2" fill="#E0A020"/></g></svg>
<div class="t" style="left:36px;top:108.57px;font-family:'Liberation Sans', sans-serif;font-size:15.5px;font-weight:400;color:#000;transform:scaleX(0.92);transform-origin:0 0;">Roots</div>
<svg class="a" style="left:1184px;top:112px" width="9" height="10" viewBox="0 0 9 10"><rect x="1" y="4" width="5" height="5" fill="#D8D8D8"/><rect x="2" y="0" width="7" height="2" fill="#000"/><rect x="7" y="0" width="2" height="6" fill="#000"/><rect x="6" y="5" width="3" height="1" fill="#000"/><rect x="0" y="3" width="7" height="2" fill="#000"/><rect x="0" y="3" width="1.6" height="7" fill="#000"/><rect x="5.4" y="3" width="1.6" height="7" fill="#000"/><rect x="0" y="8.4" width="7" height="1.6" fill="#000"/></svg>
<svg class="a" style="left:1208px;top:113px" width="9" height="8" viewBox="0 0 9 8"><path d="M.8 .6 L8.2 7.4 M8.2 .6 L.8 7.4" stroke="#000" stroke-width="1.6"/></svg>
<div class="a" style="left:10px;top:131px;width:1217px;height:91px;border:1px solid #828790;background:#FFF"></div>
<div class="a" style="left:11px;top:132px;width:501px;height:30px;background:#FCFCFC"></div>
<div class="a" style="left:57px;top:132px;width:1px;height:30px;background:#E4ECF5"></div>
<div class="a" style="left:291px;top:132px;width:1px;height:30px;background:#E4ECF5"></div>
<div class="a" style="left:401px;top:132px;width:1px;height:30px;background:#E4ECF5"></div>
<div class="a" style="left:11px;top:162px;width:500px;height:26px;background:#CFCFFC"></div>
<div class="a" style="left:57px;top:162px;width:1px;height:26px;background:#F4F4FF"></div>
<div class="a" style="left:291px;top:162px;width:1px;height:26px;background:#F4F4FF"></div>
<div class="a" style="left:401px;top:162px;width:1px;height:26px;background:#F4F4FF"></div>
<div class="a" style="left:511px;top:132px;width:1px;height:30px;background:#E4ECF5"></div>
<div class="t" style="left:-366px;width:800px;text-align:center;top:139.32px;font-family:'Liberation Sans', sans-serif;font-size:16px;font-weight:700;color:#000;">#</div>
<div class="t" style="left:-225px;width:800px;text-align:center;top:139.32px;font-family:'Liberation Sans', sans-serif;font-size:16px;font-weight:700;color:#000;">File</div>
<div class="t" style="left:-54px;width:800px;text-align:center;top:139.32px;font-family:'Liberation Sans', sans-serif;font-size:16px;font-weight:700;color:#000;">Risk</div>
<div class="t" style="left:56px;width:800px;text-align:center;top:139.32px;font-family:'Liberation Sans', sans-serif;font-size:16px;font-weight:700;color:#000;">Format</div>
<div class="t" style="left:17px;top:166.52px;font-family:'Liberation Sans', sans-serif;font-size:16px;font-weight:700;color:#000;">1</div>
<div class="t" style="left:63px;top:166.28px;font-family:'Liberation Sans', sans-serif;font-size:16.6px;font-weight:700;color:#000;">C:\...\elf-Linux-ARM64-bash</div>
<div class="t" style="left:297px;top:166.52px;font-family:'Liberation Sans', sans-serif;font-size:16px;font-weight:700;color:#000;">0%</div>
<div class="t" style="left:407px;top:166.52px;font-family:'Liberation Sans', sans-serif;font-size:16px;font-weight:700;color:#000;">ELF</div>
<div class="a" style="left:1232px;top:105px;width:521px;height:24px;border:1px solid #B4B4B4;background:linear-gradient(#F4F4F4 0%,#E2E2E2 25%,#ABABAB 50%,#D8D8D8 78%,#F2F2F2 100%)"></div>
<div class="a" style="left:1233px;top:106px;width:519px;height:1px;background:rgba(255,255,255,.7)"></div>
<svg class="a" style="left:1237px;top:108px" width="18" height="18" viewBox="0 0 18 18"><path d="M1.5 .5 h9 l4 4 v12 h-13 z" fill="#FFF" stroke="#8C8C8C" stroke-width="1"/><rect x="2" y="1" width="8" height="4" fill="#D0D0D0" opacity=".7"/><path d="M10.5 .5 v4 h4" fill="#F4F4F4" stroke="#9A9A9A"/><g stroke="#666" stroke-width="1"><path d="M3 3.5h4M3 5.5h3M3 7.5h9M3 9.5h9M3 11.5h9M3 13.5h9"/></g></svg>
<div class="t" style="left:1258px;top:108.57px;font-family:'Liberation Sans', sans-serif;font-size:15.5px;font-weight:400;color:#000;transform:scaleX(0.975);transform-origin:0 0;">Output</div>
<svg class="a" style="left:1710px;top:112px" width="9" height="10" viewBox="0 0 9 10"><rect x="1" y="4" width="5" height="5" fill="#D8D8D8"/><rect x="2" y="0" width="7" height="2" fill="#000"/><rect x="7" y="0" width="2" height="6" fill="#000"/><rect x="6" y="5" width="3" height="1" fill="#000"/><rect x="0" y="3" width="7" height="2" fill="#000"/><rect x="0" y="3" width="1.6" height="7" fill="#000"/><rect x="5.4" y="3" width="1.6" height="7" fill="#000"/><rect x="0" y="8.4" width="7" height="1.6" fill="#000"/></svg>
<svg class="a" style="left:1734px;top:113px" width="9" height="8" viewBox="0 0 9 8"><path d="M.8 .6 L8.2 7.4 M8.2 .6 L.8 7.4" stroke="#000" stroke-width="1.6"/></svg>
<div class="a" style="left:1232px;top:131px;width:521px;height:91px;border:1px solid #828790;background:#FFF"></div>
<div class="t" style="left:1238px;top:137.11px;font-family:'Liberation Mono', monospace;font-size:16.67px;font-weight:400;color:#000;transform:scaleY(0.91);transform-origin:0 13.9px;">carbon: analysis finished in 3.4 seconds</div>
<div class="a" style="left:10px;top:228px;width:374px;height:24px;border:1px solid #B4B4B4;background:linear-gradient(#F4F4F4 0%,#E2E2E2 25%,#ABABAB 50%,#D8D8D8 78%,#F2F2F2 100%)"></div>
<div class="a" style="left:11px;top:229px;width:372px;height:1px;background:rgba(255,255,255,.7)"></div>
<svg class="a" style="left:15px;top:231px" width="18" height="18" viewBox="0 0 18 18"><g fill="#8FB5EA" stroke="#4F7DC0" stroke-width=".9"><rect x="-5" y="-2" width="10" height="4" rx="1" transform="translate(5,6) rotate(-45)"/><rect x="-4" y="-2" width="8" height="4" rx="1" transform="translate(13.5,8.5) rotate(-45)"/><rect x="-4" y="-2" width="8" height="4" rx="1" transform="translate(13,15) rotate(-45)"/></g><path d="M7.5 8 v5.5 h3" fill="none" stroke="#1A1A1A" stroke-width="1.4"/></svg>
<div class="t" style="left:36px;top:231.57px;font-family:'Liberation Sans', sans-serif;font-size:15.5px;font-weight:400;color:#000;transform:scaleX(0.935);transform-origin:0 0;">Hierarchy</div>
<svg class="a" style="left:341px;top:235px" width="9" height="10" viewBox="0 0 9 10"><rect x="1" y="4" width="5" height="5" fill="#D8D8D8"/><rect x="2" y="0" width="7" height="2" fill="#000"/><rect x="7" y="0" width="2" height="6" fill="#000"/><rect x="6" y="5" width="3" height="1" fill="#000"/><rect x="0" y="3" width="7" height="2" fill="#000"/><rect x="0" y="3" width="1.6" height="7" fill="#000"/><rect x="5.4" y="3" width="1.6" height="7" fill="#000"/><rect x="0" y="8.4" width="7" height="1.6" fill="#000"/></svg>
<svg class="a" style="left:365px;top:236px" width="9" height="8" viewBox="0 0 9 8"><path d="M.8 .6 L8.2 7.4 M8.2 .6 L.8 7.4" stroke="#000" stroke-width="1.6"/></svg>
<div class="a" style="left:10px;top:254px;width:374px;height:198px;border:1px solid #828790;background:#FFF"></div>
<div class="a" style="left:11px;top:255px;width:372px;height:32px;background:#FCFCFC"></div>
<div class="t" style="left:17px;top:263.30px;font-family:'Liberation Sans', sans-serif;font-size:16.8px;font-weight:400;color:#000;">Name</div>
<div class="a" style="left:11px;top:287px;width:372px;height:1px;background:#E6EEF7"></div>
<div class="a" style="left:38px;top:288px;width:345px;height:25px;background:#D0D0D0"></div>
<svg class="a" style="left:43px;top:292px" width="19" height="17" viewBox="0 0 19 17"><defs><linearGradient id="gTerm" x1="0" y1="0" x2="0" y2="1"><stop offset="0" stop-color="#505050"/><stop offset="1" stop-color="#1C1C1C"/></linearGradient></defs><rect x=".5" y=".5" width="18" height="16" rx="1.5" fill="#BDBDBD" opacity=".6"/><rect x="1" y="1" width="16" height="14" fill="url(#gTerm)"/><path d="M3 3 l2.5 1.5 l-2.5 1.5" stroke="#B0B0B0" fill="none" stroke-width=".9"/><path d="M6 6.5 h3" stroke="#909090" stroke-width=".9"/></svg>
<div class="t" style="left:69px;top:291.34px;font-family:'Liberation Sans', sans-serif;font-size:17.3px;font-weight:700;color:#000;">elf-Linux-ARM64-bash</div>
<div class="a" style="left:11px;top:428px;width:372px;height:23px;background:#F0F0F0"></div>
<div class="a" style="left:35px;top:428px;width:47px;height:22px;background:#CDCDCD"></div>
<svg class="a" style="left:19px;top:434px" width="7" height="11" viewBox="0 0 7 11"><path d="M6 1 L1.5 5.5 L6 10" fill="none" stroke="#505050" stroke-width="2.1"/></svg>
<svg class="a" style="left:367px;top:434px" width="7" height="11" viewBox="0 0 7 11"><path d="M1 1 L5.5 5.5 L1 10" fill="none" stroke="#505050" stroke-width="2.1"/></svg>
<div class="a" style="left:10px;top:458px;width:374px;height:24px;border:1px solid #B4B4B4;background:linear-gradient(#F4F4F4 0%,#E2E2E2 25%,#ABABAB 50%,#D8D8D8 78%,#F2F2F2 100%)"></div>
<div class="a" style="left:11px;top:459px;width:372px;height:1px;background:rgba(255,255,255,.7)"></div>
<svg class="a" style="left:15px;top:461px" width="18" height="18" viewBox="0 0 18 18"><defs><linearGradient id="gCb" x1="0" y1="0" x2="1" y2="1"><stop offset="0" stop-color="#D08A3A"/><stop offset="1" stop-color="#9A5418"/></linearGradient></defs><rect x="1" y="4" width="14" height="14" rx=".8" fill="url(#gCb)"/><path d="M4 6 h8 v6 l-4 4 h-4 z" fill="#F8F8F8"/><path d="M12 12 l-4 4 v-4 z" fill="#C8C8C8"/><rect x="5" y="2" width="6" height="4" rx="1" fill="#A8A8A8" stroke="#777" stroke-width=".6"/></svg>
<div class="t" style="left:36px;top:461.57px;font-family:'Liberation Sans', sans-serif;font-size:15.5px;font-weight:400;color:#000;transform:scaleX(0.975);transform-origin:0 0;">Summary</div>
<svg class="a" style="left:341px;top:465px" width="9" height="10" viewBox="0 0 9 10"><rect x="1" y="4" width="5" height="5" fill="#D8D8D8"/><rect x="2" y="0" width="7" height="2" fill="#000"/><rect x="7" y="0" width="2" height="6" fill="#000"/><rect x="6" y="5" width="3" height="1" fill="#000"/><rect x="0" y="3" width="7" height="2" fill="#000"/><rect x="0" y="3" width="1.6" height="7" fill="#000"/><rect x="5.4" y="3" width="1.6" height="7" fill="#000"/><rect x="0" y="8.4" width="7" height="1.6" fill="#000"/></svg>
<svg class="a" style="left:365px;top:466px" width="9" height="8" viewBox="0 0 9 8"><path d="M.8 .6 L8.2 7.4 M8.2 .6 L.8 7.4" stroke="#000" stroke-width="1.6"/></svg>
<div class="a" style="left:10px;top:484px;width:374px;height:212px;border:1px solid #828790;background:#FFF"></div>
<div class="a" style="left:11px;top:485px;width:372px;height:25px;background:#F5F5F5"></div>
<div class="t" style="left:-203px;width:800px;text-align:center;top:488.71px;font-family:'Liberation Sans', sans-serif;font-size:16.9px;font-weight:400;color:#000;">Online</div>
<svg class="a" style="left:15px;top:512px" width="20" height="21" viewBox="0 0 20 21"><defs><radialGradient id="gW2" cx=".4" cy=".3" r=".75"><stop offset="0" stop-color="#7EB8F2"/><stop offset=".55" stop-color="#2F6CCB"/><stop offset="1" stop-color="#123A8A"/></radialGradient></defs><ellipse cx="10" cy="19" rx="7" ry="1.2" fill="#000" opacity=".18"/><circle cx="10" cy="9.8" r="9.3" fill="url(#gW2)"/><path d="M4 4.5 q2 -1.5 4.5 -1 q-.5 1.5 .5 2.5 q-1.5 1.5 -3 1 q-.5 2 -2.2 2.5 q-.8 -2.5 .2 -5 z M9.5 8 q2.5 -.5 3.5 1 q1.5 -.5 2.5 1 q-.5 2.5 -2.5 3.5 q-1 2 -2 4 q-1.2 -2.5 -1 -4.5 q-1.5 -1.5 -.5 -5 z M14 3.5 q2.5 1 3.5 3.5 q-1.5 .5 -2.5 -.5 q-1 -1.5 -1 -3 z" fill="#A9D3FF" opacity=".75"/><ellipse cx="8" cy="5" rx="5" ry="3" fill="#FFF" opacity=".18"/></svg>
<div class="t" style="left:42px;top:513.75px;font-family:'Liberation Sans', sans-serif;font-size:16.85px;font-weight:400;color:#000;">Intelligence: MalwareBazaar</div>
<svg class="a" style="left:15px;top:537px" width="20" height="21" viewBox="0 0 20 21"><defs><radialGradient id="gW2" cx=".4" cy=".3" r=".75"><stop offset="0" stop-color="#7EB8F2"/><stop offset=".55" stop-color="#2F6CCB"/><stop offset="1" stop-color="#123A8A"/></radialGradient></defs><ellipse cx="10" cy="19" rx="7" ry="1.2" fill="#000" opacity=".18"/><circle cx="10" cy="9.8" r="9.3" fill="url(#gW2)"/><path d="M4 4.5 q2 -1.5 4.5 -1 q-.5 1.5 .5 2.5 q-1.5 1.5 -3 1 q-.5 2 -2.2 2.5 q-.8 -2.5 .2 -5 z M9.5 8 q2.5 -.5 3.5 1 q1.5 -.5 2.5 1 q-.5 2.5 -2.5 3.5 q-1 2 -2 4 q-1.2 -2.5 -1 -4.5 q-1.5 -1.5 -.5 -5 z M14 3.5 q2.5 1 3.5 3.5 q-1.5 .5 -2.5 -.5 q-1 -1.5 -1 -3 z" fill="#A9D3FF" opacity=".75"/><ellipse cx="8" cy="5" rx="5" ry="3" fill="#FFF" opacity=".18"/></svg>
<div class="t" style="left:42px;top:538.75px;font-family:'Liberation Sans', sans-serif;font-size:16.85px;font-weight:400;color:#000;">Intelligence: HybridAnalysis</div>
<div class="a" style="left:11px;top:560px;width:372px;height:25px;background:#F5F5F5"></div>
<div class="t" style="left:-203px;width:800px;text-align:center;top:563.89px;font-family:'Liberation Sans', sans-serif;font-size:16.7px;font-weight:700;color:#000;">Intrinsic threats</div>
<div class="a" style="left:11px;top:585px;width:371px;height:25px;background:#F6F6F6;border:1px solid #DADADA;border-left:none"></div>
<svg class="a" style="left:15px;top:587px" width="20" height="20" viewBox="0 0 20 20"><defs><clipPath id="cR"><circle cx="10" cy="10" r="9.5"/></clipPath></defs><g clip-path="url(#cR)"><rect width="20" height="20" fill="#2C4A6A"/><path d="M10 10 L4.5 0 L15.5 0 Z" fill="#B9BCA6"/><path d="M10 10 L0 10 L0 20 L4.5 20 Z M10 10 L20 10 L20 20 L15.5 20 Z" fill="#C4A56E"/><path d="M10 10 L4.5 20 L15.5 20 Z" fill="#17355A"/><rect y="9.3" width="20" height="1.4" fill="#1E3552"/></g><circle cx="10" cy="10" r="9.3" fill="none" stroke="#B07A5A" stroke-width=".7"/></svg>
<div class="t" style="left:42px;top:588.71px;font-family:'Liberation Sans', sans-serif;font-size:16.9px;font-weight:700;color:#000;">Native Code: ARM64</div>
<div class="a" style="left:10px;top:702px;width:374px;height:24px;border:1px solid #B4B4B4;background:linear-gradient(#F4F4F4 0%,#E2E2E2 25%,#ABABAB 50%,#D8D8D8 78%,#F2F2F2 100%)"></div>
<div class="a" style="left:11px;top:703px;width:372px;height:1px;background:rgba(255,255,255,.7)"></div>
<svg class="a" style="left:15px;top:705px" width="18" height="18" viewBox="0 0 18 18"><g transform="translate(1,1)"><defs><linearGradient id="gDb" x1="0" y1="0" x2="1" y2="0"><stop offset="0" stop-color="#7E7E7E"/><stop offset=".35" stop-color="#FAFAFA"/><stop offset=".65" stop-color="#C4C4C4"/><stop offset="1" stop-color="#6E6E6E"/></linearGradient></defs><path d="M0 1.95 v2.90 a7.0 1.95 0 0 0 14 0 v-2.90 a7.0 1.95 0 0 1 -14 0 z" fill="url(#gDb)"/><path d="M0 5.65 v2.90 a7.0 1.95 0 0 0 14 0 v-2.90 a7.0 1.95 0 0 1 -14 0 z" fill="url(#gDb)"/><path d="M0 9.35 v2.90 a7.0 1.95 0 0 0 14 0 v-2.90 a7.0 1.95 0 0 1 -14 0 z" fill="url(#gDb)"/><ellipse cx="7.0" cy="1.95" rx="6.6" ry="1.65" fill="#E6E6E6" stroke="#A0A0A0" stroke-width=".8"/></g></svg>
<div class="t" style="left:36px;top:705.57px;font-family:'Liberation Sans', sans-serif;font-size:15.5px;font-weight:400;color:#000;transform:scaleX(0.99);transform-origin:0 0;">Format</div>
<svg class="a" style="left:341px;top:709px" width="9" height="10" viewBox="0 0 9 10"><rect x="1" y="4" width="5" height="5" fill="#D8D8D8"/><rect x="2" y="0" width="7" height="2" fill="#000"/><rect x="7" y="0" width="2" height="6" fill="#000"/><rect x="6" y="5" width="3" height="1" fill="#000"/><rect x="0" y="3" width="7" height="2" fill="#000"/><rect x="0" y="3" width="1.6" height="7" fill="#000"/><rect x="5.4" y="3" width="1.6" height="7" fill="#000"/><rect x="0" y="8.4" width="7" height="1.6" fill="#000"/></svg>
<svg class="a" style="left:365px;top:710px" width="9" height="8" viewBox="0 0 9 8"><path d="M.8 .6 L8.2 7.4 M8.2 .6 L.8 7.4" stroke="#000" stroke-width="1.6"/></svg>
<div class="a" style="left:10px;top:728px;width:374px;height:193px;border:1px solid #828790;background:#FFF"></div>
<svg class="a" style="left:43px;top:731px" width="18" height="21" viewBox="0 0 18 21"><defs><linearGradient id="gDb" x1="0" y1="0" x2="1" y2="0"><stop offset="0" stop-color="#7E7E7E"/><stop offset=".35" stop-color="#FAFAFA"/><stop offset=".65" stop-color="#C4C4C4"/><stop offset="1" stop-color="#6E6E6E"/></linearGradient></defs><path d="M0 2.60 v4.13 a8.5 2.60 0 0 0 17 0 v-4.13 a8.5 2.60 0 0 1 -17 0 z" fill="url(#gDb)"/><path d="M0 7.53 v4.13 a8.5 2.60 0 0 0 17 0 v-4.13 a8.5 2.60 0 0 1 -17 0 z" fill="url(#gDb)"/><path d="M0 12.47 v4.13 a8.5 2.60 0 0 0 17 0 v-4.13 a8.5 2.60 0 0 1 -17 0 z" fill="url(#gDb)"/><ellipse cx="8.5" cy="2.60" rx="8.1" ry="2.30" fill="#E6E6E6" stroke="#A0A0A0" stroke-width=".8"/></svg>
<div class="t" style="left:69px;top:732.80px;font-family:'Liberation Sans', sans-serif;font-size:16.8px;font-weight:400;color:#000;">header</div>
<svg class="a" style="left:43px;top:756px" width="18" height="21" viewBox="0 0 18 21"><defs><linearGradient id="gDb" x1="0" y1="0" x2="1" y2="0"><stop offset="0" stop-color="#7E7E7E"/><stop offset=".35" stop-color="#FAFAFA"/><stop offset=".65" stop-color="#C4C4C4"/><stop offset="1" stop-color="#6E6E6E"/></linearGradient></defs><path d="M0 2.60 v4.13 a8.5 2.60 0 0 0 17 0 v-4.13 a8.5 2.60 0 0 1 -17 0 z" fill="url(#gDb)"/><path d="M0 7.53 v4.13 a8.5 2.60 0 0 0 17 0 v-4.13 a8.5 2.60 0 0 1 -17 0 z" fill="url(#gDb)"/><path d="M0 12.47 v4.13 a8.5 2.60 0 0 0 17 0 v-4.13 a8.5 2.60 0 0 1 -17 0 z" fill="url(#gDb)"/><ellipse cx="8.5" cy="2.60" rx="8.1" ry="2.30" fill="#E6E6E6" stroke="#A0A0A0" stroke-width=".8"/></svg>
<div class="t" style="left:69px;top:757.80px;font-family:'Liberation Sans', sans-serif;font-size:16.8px;font-weight:400;color:#000;">segments</div>
<svg class="a" style="left:43px;top:781px" width="18" height="21" viewBox="0 0 18 21"><defs><linearGradient id="gDb" x1="0" y1="0" x2="1" y2="0"><stop offset="0" stop-color="#7E7E7E"/><stop offset=".35" stop-color="#FAFAFA"/><stop offset=".65" stop-color="#C4C4C4"/><stop offset="1" stop-color="#6E6E6E"/></linearGradient></defs><path d="M0 2.60 v4.13 a8.5 2.60 0 0 0 17 0 v-4.13 a8.5 2.60 0 0 1 -17 0 z" fill="url(#gDb)"/><path d="M0 7.53 v4.13 a8.5 2.60 0 0 0 17 0 v-4.13 a8.5 2.60 0 0 1 -17 0 z" fill="url(#gDb)"/><path d="M0 12.47 v4.13 a8.5 2.60 0 0 0 17 0 v-4.13 a8.5 2.60 0 0 1 -17 0 z" fill="url(#gDb)"/><ellipse cx="8.5" cy="2.60" rx="8.1" ry="2.30" fill="#E6E6E6" stroke="#A0A0A0" stroke-width=".8"/></svg>
<div class="t" style="left:69px;top:782.80px;font-family:'Liberation Sans', sans-serif;font-size:16.8px;font-weight:400;color:#000;">sections</div>
<svg class="a" style="left:43px;top:806px" width="18" height="21" viewBox="0 0 18 21"><defs><linearGradient id="gDb" x1="0" y1="0" x2="1" y2="0"><stop offset="0" stop-color="#7E7E7E"/><stop offset=".35" stop-color="#FAFAFA"/><stop offset=".65" stop-color="#C4C4C4"/><stop offset="1" stop-color="#6E6E6E"/></linearGradient></defs><path d="M0 2.60 v4.13 a8.5 2.60 0 0 0 17 0 v-4.13 a8.5 2.60 0 0 1 -17 0 z" fill="url(#gDb)"/><path d="M0 7.53 v4.13 a8.5 2.60 0 0 0 17 0 v-4.13 a8.5 2.60 0 0 1 -17 0 z" fill="url(#gDb)"/><path d="M0 12.47 v4.13 a8.5 2.60 0 0 0 17 0 v-4.13 a8.5 2.60 0 0 1 -17 0 z" fill="url(#gDb)"/><ellipse cx="8.5" cy="2.60" rx="8.1" ry="2.30" fill="#E6E6E6" stroke="#A0A0A0" stroke-width=".8"/></svg>
<div class="t" style="left:69px;top:807.80px;font-family:'Liberation Sans', sans-serif;font-size:16.8px;font-weight:400;color:#000;">symbols</div>
<div class="a" style="left:10px;top:921px;width:1743px;height:34px;background:#F0F0F0"></div>
<svg class="a" style="left:13px;top:925px" width="4" height="28" viewBox="0 0 4 28"><rect x="2" y="0" width="1" height="1" fill="#A0A0A0"/><rect x="1" y="1" width="2" height="1" fill="#8E8E8E"/><rect x="0" y="2" width="3" height="1" fill="#FFF" opacity=".7"/><rect x="2" y="4" width="1" height="1" fill="#A0A0A0"/><rect x="1" y="5" width="2" height="1" fill="#8E8E8E"/><rect x="0" y="6" width="3" height="1" fill="#FFF" opacity=".7"/><rect x="2" y="8" width="1" height="1" fill="#A0A0A0"/><rect x="1" y="9" width="2" height="1" fill="#8E8E8E"/><rect x="0" y="10" width="3" height="1" fill="#FFF" opacity=".7"/><rect x="2" y="12" width="1" height="1" fill="#A0A0A0"/><rect x="1" y="13" width="2" height="1" fill="#8E8E8E"/><rect x="0" y="14" width="3" height="1" fill="#FFF" opacity=".7"/><rect x="2" y="16" width="1" height="1" fill="#A0A0A0"/><rect x="1" y="17" width="2" height="1" fill="#8E8E8E"/><rect x="0" y="18" width="3" height="1" fill="#FFF" opacity=".7"/><rect x="2" y="20" width="1" height="1" fill="#A0A0A0"/><rect x="1" y="21" width="2" height="1" fill="#8E8E8E"/><rect x="0" y="22" width="3" height="1" fill="#FFF" opacity=".7"/><rect x="2" y="24" width="1" height="1" fill="#A0A0A0"/><rect x="1" y="25" width="2" height="1" fill="#8E8E8E"/><rect x="0" y="26" width="3" height="1" fill="#FFF" opacity=".7"/></svg>
<div class="a" style="left:24px;top:924px;width:1726px;height:28px;border:1px solid #A0A0A0;background:#FFF"></div>
<div class="t" style="left:30px;top:928.11px;font-family:'Liberation Mono', monospace;font-size:16.67px;font-weight:400;color:#7A7A7A;transform:scaleY(0.91);transform-origin:0 13.9px;">Enter Python code here [focus with Ctrl+Alt+.]</div>
<div class="a" style="left:391px;top:229px;width:452px;height:29px;border:1px solid #A0A0A0;border-right:none;border-bottom:none;background:linear-gradient(#F2F2F2,#E5E5E5)"></div>
<svg class="a" style="left:404px;top:233px" width="18" height="18" viewBox="0 0 18 18"><circle cx="7" cy="7" r="5.3" fill="#D6EAF8" stroke="#5E90BE" stroke-width="1.8"/><path d="M4 5.5 a3.5 3 0 0 1 6 0" fill="#FFF" opacity=".8"/><path d="M11 11 l5 5" stroke="#222" stroke-width="2.6"/></svg>
<div class="t" style="left:213px;width:800px;text-align:center;top:234.99px;font-family:'Liberation Sans', sans-serif;font-size:15.7px;font-weight:400;color:#000;transform:scaleX(0.934);transform-origin:50% 0;">Analysis [Native Code: ARM64]</div>
<svg class="a" style="left:809px;top:236px" width="14" height="14" viewBox="0 0 14 14"><rect x=".7" y=".7" width="12.6" height="12.6" rx="2" fill="#BDBDBD" stroke="#A5A5A5" stroke-width="1.2"/><path d="M4 4 l6 6 M10 4 l-6 6" stroke="#FFF" stroke-width="1.8"/></svg>
<div class="a" style="left:842px;top:227px;width:456px;height:31px;border:1px solid #A0A0A0;border-bottom:none;background:#FFF"></div>
<svg class="a" style="left:860px;top:232px" width="16" height="17" viewBox="0 0 16 17"><defs><linearGradient id="gDh" x1="0" y1="0" x2="0" y2="1"><stop offset="0" stop-color="#C8C8C8"/><stop offset="1" stop-color="#FFFFFF"/></linearGradient></defs><path d="M1.5 1.5 h9 l4 4 v10 h-13 z" fill="#FFF" stroke="#8C8C8C" stroke-width="1"/><rect x="2" y="2" width="8" height="4" fill="url(#gDh)"/><path d="M10.5 1.5 v4 h4" fill="#F4F4F4" stroke="#9A9A9A"/><g stroke="#555" stroke-width="1"><path d="M3 4.5h4M3 6.5h3M3 8.5h9M3 10.5h9M3 12.5h9"/></g></svg>
<div class="a" style="left:391px;top:256px;width:451px;height:1px;background:#A6A6A6"></div>
<div class="t" style="left:667.5px;width:800px;text-align:center;top:234.99px;font-family:'Liberation Sans', sans-serif;font-size:15.7px;font-weight:400;color:#000;transform:scaleX(0.945);transform-origin:50% 0;">Decompiler [Native Code: ARM64]</div>
<svg class="a" style="left:1263px;top:235px" width="14" height="14" viewBox="0 0 14 14"><rect x=".7" y=".7" width="12.6" height="12.6" rx="2" fill="#E27B4E" stroke="#D83A22" stroke-width="1.3"/><path d="M4 4 l6 6 M10 4 l-6 6" stroke="#FFF" stroke-width="1.8"/></svg>
<div class="a" style="left:389px;top:257px;width:1364px;height:664px;border:1px solid #828790;background:#FFF"></div>
<div class="a" style="left:843px;top:257px;width:454px;height:1px;background:#828790"></div>
<div class="a" style="left:395px;top:420px;width:1328px;height:20px;background:#F4F4F4"></div>
<div class="a" style="left:1729px;top:258px;width:23px;height:632px;background:#F0F0F0"></div>
<div class="a" style="left:1729px;top:316px;width:22px;height:25px;background:#CDCDCD"></div>
<svg class="a" style="left:1735px;top:267px" width="11" height="7" viewBox="0 0 11 7"><path d="M1 6 L5.5 1.5 L10 6" fill="none" stroke="#555" stroke-width="1.8"/></svg>
<svg class="a" style="left:1735px;top:875px" width="11" height="7" viewBox="0 0 11 7"><path d="M1 1 L5.5 5.5 L10 1" fill="none" stroke="#555" stroke-width="1.8"/></svg>
<div class="a" style="left:390px;top:890px;width:1362px;height:30px;background:#F0F0F0"></div>
<div class="t" style="left:399px;top:898.48px;font-family:'Liberation Sans', sans-serif;font-size:15.6px;font-weight:400;color:#000;transform:scaleX(0.935);transform-origin:0 0;">Line: 55 - Column: 105</div>
<div class="a" style="left:395px;top:261.4px;transform:scaleY(0.91);transform-origin:0 0;white-space:pre;font-family:'Liberation Mono', monospace;font-size:16.67px;line-height:21.978px;font-weight:400;-webkit-text-stroke:0.45px;color:#3D3D8F">    <span style="color:#F8875C">while</span> <span style="color:#3D3D8F">(</span><span style="color:#3D3D8F">_debugging_login_shell</span> <span style="color:#3D3D8F">!</span><span style="color:#3D3D8F">=</span> <span style="color:#3D3D8F">0</span><span style="color:#3D3D8F">)</span> <span style="color:#3D3D8F">{</span>
        <span style="color:#56605E">sleep</span><span style="color:#3D3D8F">(</span><span style="color:#3D3D8F">3</span><span style="color:#3D3D8F">)</span><span style="color:#3D3D8F">;</span>
    <span style="color:#3D3D8F">}</span>
    <span style="color:#56605E">set_default_locale</span><span style="color:#3D3D8F">(</span><span style="color:#3D3D8F">)</span><span style="color:#3D3D8F">;</span>
    <span style="color:#3D3D8F">uVar7</span> <span style="color:#3D3D8F">=</span> <span style="color:#56605E">getuid</span><span style="color:#3D3D8F">(</span><span style="color:#3D3D8F">)</span><span style="color:#3D3D8F">;</span>
    <span style="color:#3D3D8F">unaff_x20</span> <span style="color:#3D3D8F">=</span> <span style="color:#3D3D8F">(</span><span style="color:#6AAAF5">uint8_t</span> <span style="color:#3D3D8F">*</span><span style="color:#3D3D8F">)</span><span style="color:#3D3D8F">(</span><span style="color:#3D3D8F">uVar7</span> <span style="color:#3D3D8F">&amp;</span> <span style="color:#3D3D8F">0xFFFFFFFF</span><span style="color:#3D3D8F">)</span><span style="color:#3D3D8F">;</span>
    <span style="color:#F8875C">if</span> <span style="color:#3D3D8F">(</span><span style="color:#3D3D8F">(</span><span style="color:#6AAAF5">int32_t</span><span style="color:#3D3D8F">)</span><span style="color:#3D3D8F">uVar7</span> <span style="color:#3D3D8F">!</span><span style="color:#3D3D8F">=</span> <span style="color:#3D3D8F">_current_user</span><span style="color:#3D3D8F">)</span> <span style="color:#3D3D8F">{</span>
        <span style="color:#F8875C">if</span> <span style="color:#3D3D8F">(</span><span style="color:#3D3D8F">*</span><span style="color:#3D3D8F">(</span><span style="color:#6AAAF5">int64_t</span> <span style="color:#3D3D8F">*</span><span style="color:#3D3D8F">)</span><span style="color:#3D3D8F">0x4D6670</span> <span style="color:#3D3D8F">!</span><span style="color:#3D3D8F">=</span> <span style="color:#3D3D8F">0</span><span style="color:#3D3D8F">)</span> <span style="color:#3D3D8F">{</span>
            <span style="color:#56605E">sh_xfree</span><span style="color:#3D3D8F">(</span><span style="color:#3D3D8F">*</span><span style="color:#3D3D8F">(</span><span style="color:#6AAAF5">int64_t</span> <span style="color:#3D3D8F">*</span><span style="color:#3D3D8F">)</span><span style="color:#3D3D8F">0x4D6670</span><span style="color:#3D3D8F">,</span> <span style="color:#3C9A5C">&quot;../bash/shell.c&quot;</span><span style="color:#3D3D8F">,</span> <span style="color:#3D3D8F">0x4A3</span><span style="color:#3D3D8F">)</span><span style="color:#3D3D8F">;</span>
        <span style="color:#3D3D8F">}</span>
        <span style="color:#F8875C">if</span> <span style="color:#3D3D8F">(</span><span style="color:#3D3D8F">*</span><span style="color:#3D3D8F">(</span><span style="color:#6AAAF5">int64_t</span> <span style="color:#3D3D8F">*</span><span style="color:#3D3D8F">)</span><span style="color:#3D3D8F">0x4D6678</span> <span style="color:#3D3D8F">!</span><span style="color:#3D3D8F">=</span> <span style="color:#3D3D8F">0</span><span style="color:#3D3D8F">)</span> <span style="color:#3D3D8F">{</span>
            <span style="color:#56605E">sh_xfree</span><span style="color:#3D3D8F">(</span><span style="color:#3D3D8F">*</span><span style="color:#3D3D8F">(</span><span style="color:#6AAAF5">int64_t</span> <span style="color:#3D3D8F">*</span><span style="color:#3D3D8F">)</span><span style="color:#3D3D8F">0x4D6678</span><span style="color:#3D3D8F">,</span> <span style="color:#3C9A5C">&quot;../bash/shell.c&quot;</span><span style="color:#3D3D8F">,</span> <span style="color:#3D3D8F">0x4A4</span><span style="color:#3D3D8F">)</span><span style="color:#3D3D8F">;</span>
        <span style="color:#3D3D8F">}</span>
        <span style="color:#F8875C">if</span> <span style="color:#3D3D8F">(</span><span style="color:#3D3D8F">*</span><span style="color:#3D3D8F">(</span><span style="color:#6AAAF5">int64_t</span> <span style="color:#3D3D8F">*</span><span style="color:#3D3D8F">)</span><span style="color:#3D3D8F">0x4D6680</span> <span style="color:#3D3D8F">!</span><span style="color:#3D3D8F">=</span> <span style="color:#3D3D8F">0</span><span style="color:#3D3D8F">)</span> <span style="color:#3D3D8F">{</span>
            <span style="color:#56605E">sh_xfree</span><span style="color:#3D3D8F">(</span><span style="color:#3D3D8F">*</span><span style="color:#3D3D8F">(</span><span style="color:#6AAAF5">int64_t</span> <span style="color:#3D3D8F">*</span><span style="color:#3D3D8F">)</span><span style="color:#3D3D8F">0x4D6680</span><span style="color:#3D3D8F">,</span> <span style="color:#3C9A5C">&quot;../bash/shell.c&quot;</span><span style="color:#3D3D8F">,</span> <span style="color:#3D3D8F">0x4A5</span><span style="color:#3D3D8F">)</span><span style="color:#3D3D8F">;</span>
        <span style="color:#3D3D8F">}</span>
        <span style="color:#3D3D8F">*</span><span style="color:#3D3D8F">(</span><span style="color:#6AAAF5">int64_t</span> <span style="color:#3D3D8F">*</span><span style="color:#3D3D8F">)</span><span style="color:#3D3D8F">0x4D6680</span> <span style="color:#3D3D8F">=</span> <span style="color:#3D3D8F">0</span><span style="color:#3D3D8F">;</span>
        <span style="color:#3D3D8F">*</span><span style="color:#3D3D8F">(</span><span style="color:#6AAAF5">int64_t</span> <span style="color:#3D3D8F">*</span><span style="color:#3D3D8F">)</span><span style="color:#3D3D8F">0x4D6678</span> <span style="color:#3D3D8F">=</span> <span style="color:#3D3D8F">0</span><span style="color:#3D3D8F">;</span>
        <span style="color:#3D3D8F">*</span><span style="color:#3D3D8F">(</span><span style="color:#6AAAF5">int64_t</span> <span style="color:#3D3D8F">*</span><span style="color:#3D3D8F">)</span><span style="color:#3D3D8F">0x4D6670</span> <span style="color:#3D3D8F">=</span> <span style="color:#3D3D8F">0</span><span style="color:#3D3D8F">;</span>
    <span style="color:#3D3D8F">}</span>
    <span style="color:#3D3D8F">_current_user</span> <span style="color:#3D3D8F">=</span> <span style="color:#3D3D8F">(</span><span style="color:#6AAAF5">int32_t</span><span style="color:#3D3D8F">)</span><span style="color:#3D3D8F">uVar7</span><span style="color:#3D3D8F">;</span>
    <span style="color:#3D3D8F">*</span><span style="color:#3D3D8F">(</span><span style="color:#6AAAF5">int32_t</span> <span style="color:#3D3D8F">*</span><span style="color:#3D3D8F">)</span><span style="color:#3D3D8F">0x4D6668</span> <span style="color:#3D3D8F">=</span> <span style="color:#56605E">getgid</span><span style="color:#3D3D8F">(</span><span style="color:#3D3D8F">)</span><span style="color:#3D3D8F">;</span>
    <span style="color:#3D3D8F">*</span><span style="color:#3D3D8F">(</span><span style="color:#6AAAF5">int32_t</span> <span style="color:#3D3D8F">*</span><span style="color:#3D3D8F">)</span><span style="color:#3D3D8F">0x4D6664</span> <span style="color:#3D3D8F">=</span> <span style="color:#56605E">geteuid</span><span style="color:#3D3D8F">(</span><span style="color:#3D3D8F">)</span><span style="color:#3D3D8F">;</span>
    <span style="color:#3D3D8F">*</span><span style="color:#3D3D8F">(</span><span style="color:#6AAAF5">int32_t</span> <span style="color:#3D3D8F">*</span><span style="color:#3D3D8F">)</span><span style="color:#3D3D8F">0x4D666C</span> <span style="color:#3D3D8F">=</span> <span style="color:#56605E">getegid</span><span style="color:#3D3D8F">(</span><span style="color:#3D3D8F">)</span><span style="color:#3D3D8F">;</span>
    <span style="color:#3D3D8F">*</span><span style="color:#3D3D8F">(</span><span style="color:#6AAAF5">uint32_t</span> <span style="color:#3D3D8F">*</span><span style="color:#3D3D8F">)</span><span style="color:#3D3D8F">0x4DE6E0</span> <span style="color:#3D3D8F">=</span> <span style="color:#3D3D8F">1</span><span style="color:#3D3D8F">;</span>
    <span style="color:#F8875C">if</span> <span style="color:#3D3D8F">(</span><span style="color:#3D3D8F">_current_user</span> <span style="color:#3D3D8F">=</span><span style="color:#3D3D8F">=</span> <span style="color:#3D3D8F">*</span><span style="color:#3D3D8F">(</span><span style="color:#6AAAF5">int32_t</span> <span style="color:#3D3D8F">*</span><span style="color:#3D3D8F">)</span><span style="color:#3D3D8F">0x4D6664</span><span style="color:#3D3D8F">)</span> <span style="color:#3D3D8F">{</span>
        <span style="color:#3D3D8F">*</span><span style="color:#3D3D8F">(</span><span style="color:#6AAAF5">uint32_t</span> <span style="color:#3D3D8F">*</span><span style="color:#3D3D8F">)</span><span style="color:#3D3D8F">0x4DE6E0</span> <span style="color:#3D3D8F">=</span> <span style="color:#3D3D8F">(</span><span style="color:#6AAAF5">uint32_t</span><span style="color:#3D3D8F">)</span><span style="color:#3D3D8F">(</span><span style="color:#3D3D8F">*</span><span style="color:#3D3D8F">(</span><span style="color:#6AAAF5">int32_t</span> <span style="color:#3D3D8F">*</span><span style="color:#3D3D8F">)</span><span style="color:#3D3D8F">0x4D666C</span> <span style="color:#3D3D8F">!</span><span style="color:#3D3D8F">=</span> <span style="color:#3D3D8F">*</span><span style="color:#3D3D8F">(</span><span style="color:#6AAAF5">int32_t</span> <span style="color:#3D3D8F">*</span><span style="color:#3D3D8F">)</span><span style="color:#3D3D8F">0x4D6668</span><span style="color:#3D3D8F">)</span><span style="color:#3D3D8F">;</span>
    <span style="color:#3D3D8F">}</span>
    <span style="color:#3D3D8F">iVar8</span> <span style="color:#3D3D8F">=</span> <span style="color:#56605E">getenv</span><span style="color:#3D3D8F">(</span><span style="color:#3C9A5C">&quot;POSIXLY_CORRECT&quot;</span><span style="color:#3D3D8F">)</span><span style="color:#3D3D8F">;</span>
    <span style="color:#F8875C">if</span> <span style="color:#3D3D8F">(</span><span style="color:#3D3D8F">(</span><span style="color:#3D3D8F">iVar8</span> <span style="color:#3D3D8F">!</span><span style="color:#3D3D8F">=</span> <span style="color:#3D3D8F">0</span><span style="color:#3D3D8F">)</span> <span style="color:#3D3D8F">|</span><span style="color:#3D3D8F">|</span> <span style="color:#3D3D8F">(</span><span style="color:#3D3D8F">iVar8</span> <span style="color:#3D3D8F">=</span> <span style="color:#56605E">getenv</span><span style="color:#3D3D8F">(</span><span style="color:#3C9A5C">&quot;POSIX_PEDANTIC&quot;</span><span style="color:#3D3D8F">)</span><span style="color:#3D3D8F">,</span> <span style="color:#3D3D8F">iVar8</span> <span style="color:#3D3D8F">!</span><span style="color:#3D3D8F">=</span> <span style="color:#3D3D8F">0</span><span style="color:#3D3D8F">)</span><span style="color:#3D3D8F">)</span> <span style="color:#3D3D8F">{</span>
        <span style="color:#3D3D8F">_posixly_correct</span> <span style="color:#3D3D8F">=</span> <span style="color:#3D3D8F">1</span><span style="color:#3D3D8F">;</span></div>
<div class="a" style="left:390px;top:890px;width:1px;height:30px;background:#F9F9F9"></div>
</body></html>
